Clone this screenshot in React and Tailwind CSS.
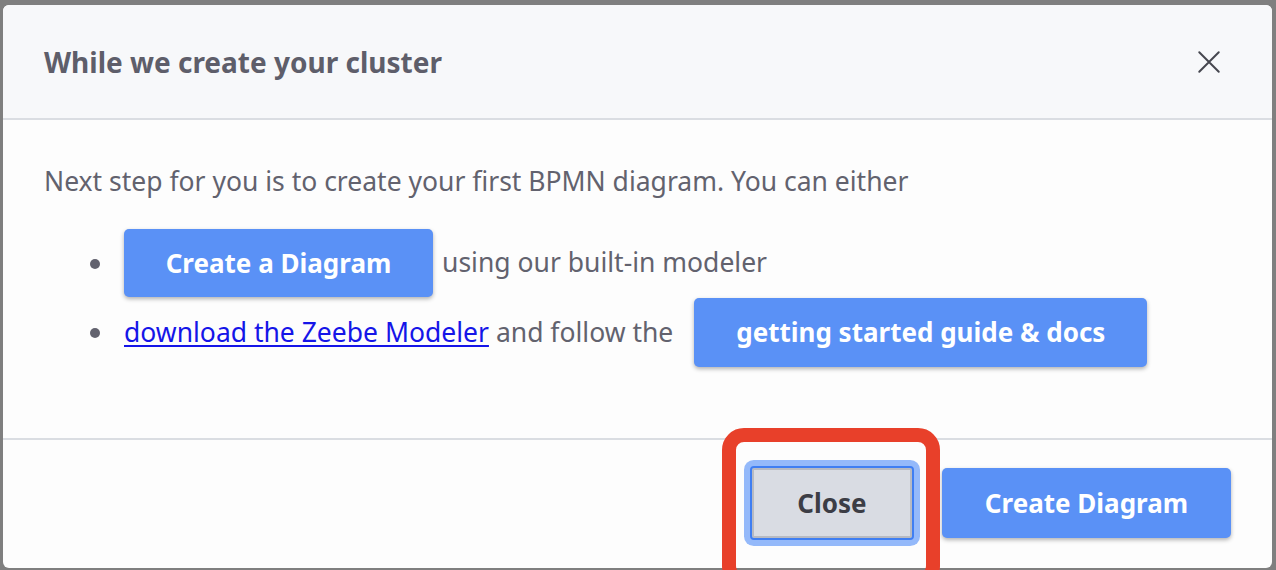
import React from 'react';

const BlueButton = ({ children, className = '' }) => (
  <button
    className={`inline-flex items-center justify-center rounded-[5px] bg-[#5a91f6] font-bold text-white shadow-[0_2px_4px_rgba(0,0,0,0.3)] ${className}`}
  >
    {children}
  </button>
);

const App = () => {
  return (
    <div
      className="relative h-[570px] w-[1276px] overflow-hidden bg-[#7f7f7f] pl-[3px] pr-[4px] pt-[5px]"
      style={{ fontFamily: '"Noto Sans", "Open Sans", sans-serif' }}
    >
      {/* Modal */}
      <div className="flex h-[563px] flex-col overflow-hidden rounded-[6px] bg-[#fdfdfd]">
        {/* Header */}
        <div className="flex h-[115px] shrink-0 items-center justify-between border-b-2 border-[#dadde2] bg-[#f7f8fa] pl-[41px] pr-[50px]">
          <h1 className="text-[28px] font-bold text-[#5e5e6a]">While we create your cluster</h1>
          <svg width="26" height="26" viewBox="0 0 24 24" fill="none" stroke="#45464e" strokeWidth="1.8" strokeLinecap="round">
            <path d="M3 3l18 18M21 3L3 21" />
          </svg>
        </div>

        {/* Body */}
        <div className="h-[318px] shrink-0 pl-[41px] pt-[43px] text-[26.5px] text-[#62626e]">
          <p className="leading-[36px]">Next step for you is to create your first BPMN diagram. You can either</p>
          <ul className="mt-[30px] pl-[80px]">
            <li className="relative flex items-center gap-[9px] before:absolute before:left-[-34px] before:top-[30px] before:h-[10px] before:w-[10px] before:rounded-full before:bg-[#62626e]">
              <BlueButton className="h-[68px] w-[309px] text-[26px]">Create a Diagram</BlueButton>
              <span>using our built-in modeler</span>
            </li>
            <li className="relative mt-[1px] flex items-center gap-[7px] before:absolute before:left-[-34px] before:top-[30px] before:h-[10px] before:w-[10px] before:rounded-full before:bg-[#62626e]">
              <a href="#" className="text-[#1515e8] underline underline-offset-[3px]">download the Zeebe Modeler</a>
              <span>and follow the</span>
              <BlueButton className="ml-[14px] h-[69px] w-[453px] text-[26px]">getting started guide &amp; docs</BlueButton>
            </li>
          </ul>
        </div>

        {/* Footer */}
        <div className="flex flex-1 items-center justify-end gap-[28px] border-t-2 border-[#dadde2] pb-[2px] pr-[41px]">
          <button className="h-[74px] w-[164px] rounded-[4px] border-2 border-[#3f7ef2] bg-[#d9dce3] text-[26px] font-bold text-[#3c3d45] shadow-[0_0_0_6px_#94b9fa,inset_0_0_0_2px_#b7bac2]">
            Close
          </button>
          <BlueButton className="h-[70px] w-[289px] text-[26px]">Create Diagram</BlueButton>
        </div>
      </div>

      {/* Annotation highlight */}
      <div className="absolute left-[722px] top-[428px] h-[160px] w-[218px] rounded-[22px] border-[14px] border-[#e8402a]" />
    </div>
  );
};

export default App;
